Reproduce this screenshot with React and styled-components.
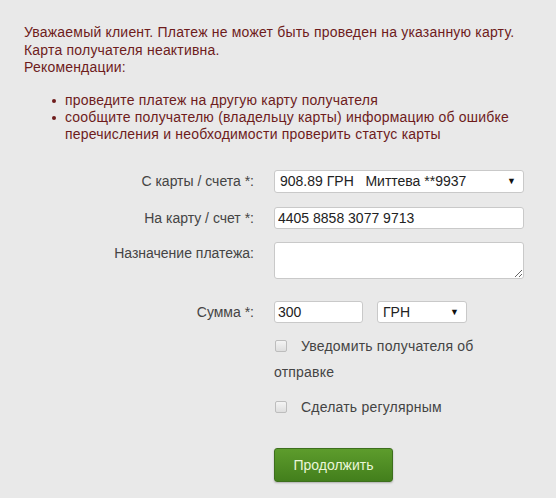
import React from 'react'
import styled, { createGlobalStyle } from 'styled-components'

const Global = createGlobalStyle`
  html, body {
    margin: 0;
    padding: 0;
    background: #e9e9e9;
  }
  body {
    font-family: "Liberation Sans", Arial, sans-serif;
  }
`

const Page = styled.div`
  width: 556px;
  height: 498px;
  box-sizing: border-box;
  padding-top: 24px;
  background: #e9e9e9;
  overflow: hidden;
`

const Message = styled.div`
  padding-left: 24px;
  font-size: 14px;
  line-height: 17.5px;
  letter-spacing: 0.2px;
  color: #6e1c1c;
`

const Advice = styled.ul`
  margin: 15px 0 0 0;
  padding-left: 65px;
  font-size: 14px;
  line-height: 17px;
  letter-spacing: 0.2px;
  color: #6e1c1c;
  list-style: none;
`

const AdviceItem = styled.li`
  position: relative;
  &::before {
    content: '';
    position: absolute;
    left: -13px;
    top: 7px;
    width: 4px;
    height: 4px;
    border-radius: 50%;
    background: #6e1c1c;
  }
`

const Form = styled.div`
  margin-top: 27px;
  display: grid;
  grid-template-columns: 254px 250px;
  column-gap: 20px;
  align-items: start;
`

const Label = styled.div`
  text-align: right;
  font-size: 14px;
  color: #444;
  line-height: ${p => p.$h || 22}px;
  margin-bottom: ${p => p.$gap || 14}px;
`

const Field = styled.div`
  margin-bottom: ${p => p.$gap || 14}px;
  display: flex;
  gap: 14px;
`

const SelectBox = styled.div`
  box-sizing: border-box;
  width: ${p => p.$w || 250}px;
  height: ${p => p.$h || 23}px;
  display: flex;
  align-items: center;
  justify-content: space-between;
  padding: 0 7px 0 5px;
  background: #fff;
  border: 1px solid #c9c9c9;
  border-radius: 3px;
  font-size: 14px;
  color: #222;
  white-space: pre;
`

const Arrow = styled.span`
  font-size: 9px;
  color: #111;
`

const TextInput = styled.input`
  box-sizing: border-box;
  width: ${p => p.$w || 250}px;
  height: 22px;
  margin: 0;
  padding: 0 3px;
  background: #fff;
  border: 1px solid #c9c9c9;
  border-radius: 3px;
  font-family: "Liberation Sans", Arial, sans-serif;
  font-size: 14px;
  color: #222;
  outline: none;
`

const TextArea = styled.textarea`
  box-sizing: border-box;
  width: 250px;
  height: 37px;
  margin: 0;
  padding: 3px;
  display: block;
  background: #fff;
  border: 1px solid #c9c9c9;
  border-radius: 3px;
  outline: none;
`

const Options = styled.div`
  grid-column: 2;
  width: 210px;
`

const Option = styled.label`
  display: block;
  font-size: 14px;
  line-height: 26px;
  letter-spacing: 0.2px;
  color: #444;
  margin-bottom: ${p => p.$gap || 0}px;
`

const Box = styled.span`
  display: inline-block;
  box-sizing: border-box;
  width: 12px;
  height: 12px;
  margin: 0 14px 0 1px;
  vertical-align: -1px;
  border: 1px solid #bdbdbd;
  border-radius: 2px;
  background: linear-gradient(#f4f4f4, #dedede);
`

const Submit = styled.button`
  grid-column: 2;
  margin-top: 28px;
  width: 119px;
  height: 34px;
  border: 1px solid #3d6f1d;
  border-radius: 3px;
  background: linear-gradient(#5d9c2c, #437f1c);
  box-shadow: 0 1px 2px rgba(0, 0, 0, 0.25);
  color: #eaf6d8;
  font-family: "Liberation Sans", Arial, sans-serif;
  font-size: 14px;
  cursor: pointer;
`

export default function App() {
  return (
    <Page>
      <Global />
      <Message>
        Уважаемый клиент. Платеж не может быть проведен на указанную карту.
        <br />
        Карта получателя неактивна.
        <br />
        Рекомендации:
      </Message>
      <Advice>
        <AdviceItem>проведите платеж на другую карту получателя</AdviceItem>
        <AdviceItem>
          сообщите получателю (владельцу карты) информацию об ошибке
          <br />
          перечисления и необходимости проверить статус карты
        </AdviceItem>
      </Advice>

      <Form>
        <Label $h={23}>С карты / счета *:</Label>
        <Field>
          <SelectBox>
            <span>908.89 ГРН   Миттева **9937</span>
            <Arrow>▼</Arrow>
          </SelectBox>
        </Field>

        <Label $gap={13}>На карту / счет *:</Label>
        <Field $gap={13}>
          <TextInput defaultValue="4405 8858 3077 9713" />
        </Field>

        <Label $gap={22}>Назначение платежа:</Label>
        <Field $gap={22}>
          <TextArea />
        </Field>

        <Label $gap={10}>Сумма *:</Label>
        <Field $gap={10}>
          <TextInput $w={89} defaultValue="300" />
          <SelectBox $w={90} $h={22}>
            <span>ГРН</span>
            <Arrow>▼</Arrow>
          </SelectBox>
        </Field>

        <Options>
          <Option $gap={9}>
            <Box />
            Уведомить получателя об отправке
          </Option>
          <Option>
            <Box />
            Сделать регулярным
          </Option>
        </Options>

        <Submit>Продолжить</Submit>
      </Form>
    </Page>
  )
}
